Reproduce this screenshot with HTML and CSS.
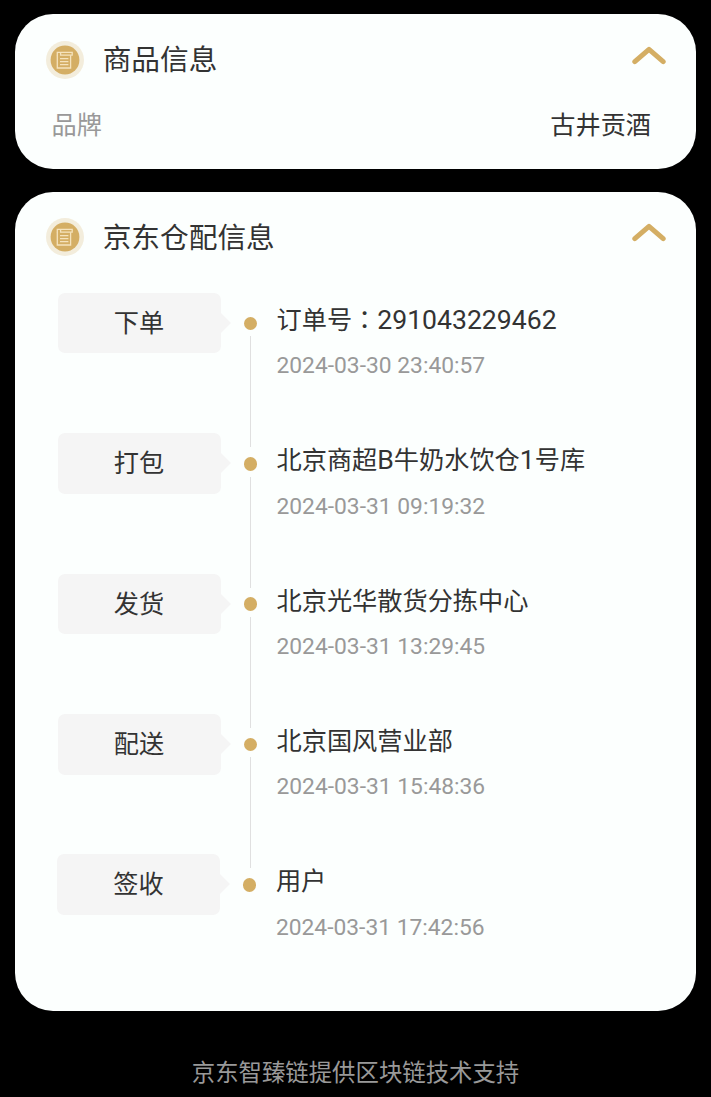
FILE: index.html
```
<!DOCTYPE html>
<html lang="zh-CN">

<head>
    <meta charset="UTF-8">
    <meta name="viewport" content="width=device-width, initial-scale=1.0">
    <title>商品信息</title>
    <link rel="stylesheet" href="styles.css">
</head>

<body>
    <svg class="defs">
        <symbol id="list" viewBox="0 0 38 38">
            <circle cx="19" cy="19" r="19" fill="#f3eddc" />
            <circle cx="19" cy="19" r="14.4" fill="#d4ae64" />
            <g fill="none" stroke="#f5e3bd" stroke-width="1.3">
                <path d="M11.3 14V27H24.6V14.2" />
                <path d="M11.3 14.2V11.4H26.2V14.2H14.6V11.6" />
                <path d="M14 17.6H22.4M14 20.6H22.4M14 23.6H22.4" />
            </g>
        </symbol>
        <symbol id="up" viewBox="0 0 34 20">
            <path d="M2.8 15.7L17 3.4L31.2 15.7" fill="none" stroke="#d4ae64" stroke-width="5" stroke-linecap="round" stroke-linejoin="round" />
        </symbol>
    </svg>

    <div class="card goods">
        <div class="head">
            <svg class="icon"><use href="#list" /></svg>
            <h2>商品信息</h2>
            <svg class="up"><use href="#up" /></svg>
        </div>
        <div class="brand">
            <span class="gray">品牌</span>
            <span>古井贡酒</span>
        </div>
    </div>

    <div class="card store">
        <div class="head">
            <svg class="icon"><use href="#list" /></svg>
            <h2>京东仓配信息</h2>
            <svg class="up"><use href="#up" /></svg>
        </div>
        <ul>
            <li>
                <div class="step">下单</div>
                <div class="dot"></div>
                <div class="info">
                    <p>订单号<span class="colon" lang="zh-TW">：</span><span class="en">291043229462</span></p>
                    <div class="time">2024-03-30 23:40:57</div>
                </div>
            </li>
            <li>
                <div class="step">打包</div>
                <div class="dot"></div>
                <div class="info">
                    <p>北京商超<span class="en">B</span>牛奶水饮仓<span class="en">1</span>号库</p>
                    <div class="time">2024-03-31 09:19:32</div>
                </div>
            </li>
            <li>
                <div class="step">发货</div>
                <div class="dot"></div>
                <div class="info">
                    <p>北京光华散货分拣中心</p>
                    <div class="time">2024-03-31 13:29:45</div>
                </div>
            </li>
            <li>
                <div class="step">配送</div>
                <div class="dot"></div>
                <div class="info">
                    <p>北京国风营业部</p>
                    <div class="time">2024-03-31 15:48:36</div>
                </div>
            </li>
            <li>
                <div class="step">签收</div>
                <div class="dot"></div>
                <div class="info">
                    <p>用户</p>
                    <div class="time">2024-03-31 17:42:56</div>
                </div>
            </li>
        </ul>
    </div>

    <div class="footer">京东智臻链提供区块链技术支持</div>
</body>

</html>
```
FILE: styles.css
```
* {
    box-sizing: border-box;
    margin: 0;
    padding: 0;
}

body {
    height: 1097px;
    padding: 14.3px 15px 0;
    overflow: hidden;
    background-color: #000;
    color: #333;
    font-family: Roboto, "Noto Sans CJK SC", sans-serif;
    font-size: 25.2px;
}

.defs {
    display: none;
}

.card {
    background-color: #fcfffe;
    border-radius: 38px;
    overflow: hidden;
}

.goods {
    height: 154.4px;
    margin-bottom: 23px;
}

.store {
    height: 819px;
}

.head {
    display: flex;
    align-items: center;
    height: 90.6px;
    padding: 0 30px 0 30.7px;
}

.icon {
    width: 38px;
    height: 38px;
}

h2 {
    flex: 1;
    margin-left: 19px;
    padding-top: 1.4px;
    font-size: 28.7px;
    font-weight: 400;
    line-height: 40px;
}

.up {
    width: 34px;
    height: 20px;
    margin-top: -7px;
}

.brand {
    display: flex;
    justify-content: space-between;
    padding: 0 45px 0 36.5px;
    line-height: 42.6px;
}

.gray {
    color: #999;
}

ul {
    padding: 10.7px 0 0 42.5px;
    list-style: none;
}

li {
    display: flex;
    height: 140.35px;
}

li:last-child {
    margin-left: -0.6px;
}

.step {
    position: relative;
    width: 163px;
    height: 60.5px;
    border-radius: 7px;
    background-color: #f5f5f5;
    line-height: 62px;
    text-align: center;
}

.step::after {
    content: '';
    position: absolute;
    left: 100%;
    top: 20px;
    border: 10px solid transparent;
    border-left-color: #f5f5f5;
    border-right: 0;
}

.dot {
    width: 14px;
    margin-left: 23px;
    padding-top: 23.7px;
}

.dot::before {
    content: '';
    display: block;
    width: 13.5px;
    height: 13.5px;
    border-radius: 50%;
    background-color: #d4ae64;
}

/* line down to the next dot */
.dot::after {
    content: '';
    display: block;
    width: 1px;
    height: 111px;
    margin: 6px 0 0 6.5px;
    background-color: #e0e0e0;
}

li:last-child .dot::after {
    display: none;
}

.info {
    margin-left: 19px;
    padding-top: 8px;
    white-space: nowrap;
}

.info p {
    height: 40px;
    line-height: 40px;
}

.colon,
.en {
    line-height: 1;
}

.colon {
    font-family: "Noto Sans CJK TC", sans-serif;
}

.en {
    font-size: 26.6px;
}

.time {
    margin-top: 10.4px;
    color: #999;
    font-size: 22.8px;
    line-height: 30px;
}

.footer {
    margin-top: 42px;
    color: #999;
    font-size: 23.4px;
    line-height: 40px;
    text-align: center;
}
```
